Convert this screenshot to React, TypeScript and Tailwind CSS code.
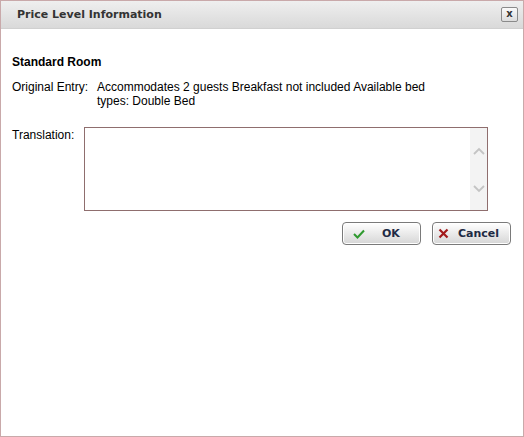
import React from "react";

export default function App() {
  return (
    <div className="w-[524px] h-[437px] bg-white border border-[#c9a9aa] flex flex-col">
      <div className="h-[28px] flex items-center justify-between pl-[16px] pr-[5px] bg-gradient-to-b from-[#efefef] to-[#d9d9d9] border-b border-[#d0d0d0]">
        <span className="font-['DejaVu_Sans'] font-bold text-[11px] text-[#333] pt-[1px]">Price Level Information</span>
        <div className="w-[17px] h-[15px] rounded-[2px] border border-[#8a8a8a] bg-gradient-to-b from-[#fafafa] to-[#dcdcdc] flex items-center justify-center font-['DejaVu_Sans'] font-bold text-[10px] leading-none text-[#333] pb-[1px]">x</div>
      </div>
      <div className="flex flex-col px-[11px] pt-[26px] font-['Liberation_Sans'] text-[12px] text-black leading-[14px]">
        <div className="font-bold">Standard Room</div>
        <div className="flex mt-[11px]">
          <div className="w-[85px] shrink-0">Original Entry:</div>
          <div className="w-[340px]">Accommodates 2 guests Breakfast not included Available bed types: Double Bed</div>
        </div>
        <div className="flex mt-[19px]">
          <div className="w-[72px] shrink-0 pt-[1px]">Translation:</div>
          <div className="w-[404px] h-[84px] border border-[#8f6e6e] flex justify-end">
            <div className="w-[17px] h-full bg-[#f3f3f3] flex flex-col items-center justify-between pt-[19px] pb-[17px]">
              <svg width="12" height="8" viewBox="0 0 12 8"><path d="M1 7 L6 2 L11 7" fill="none" stroke="#c4c4c4" strokeWidth="1.8" /></svg>
              <svg width="12" height="8" viewBox="0 0 12 8"><path d="M1 1 L6 6 L11 1" fill="none" stroke="#c4c4c4" strokeWidth="1.8" /></svg>
            </div>
          </div>
        </div>
        <div className="flex justify-end gap-[11px] mt-[11px] pr-[1px]">
          <button className="w-[79px] h-[23px] rounded-[4px] border border-[#7a7a7a] bg-gradient-to-b from-[#ffffff] to-[#d6d6d6] flex items-center pl-[10px] gap-[17px] font-['DejaVu_Sans'] font-bold text-[11px] text-[#1e2a44] shadow-[inset_0_0_0_1px_#fff]">
            <svg width="12" height="10" viewBox="0 0 12 10"><path d="M1 5 L4.5 8.5 L11 1.5" fill="none" stroke="#2f9a2f" strokeWidth="2" /></svg>
            <span>OK</span>
          </button>
          <button className="w-[79px] h-[23px] rounded-[4px] border border-[#7a7a7a] bg-gradient-to-b from-[#ffffff] to-[#d6d6d6] flex items-center pl-[5px] gap-[9px] font-['DejaVu_Sans'] font-bold text-[11px] text-[#1e2a44] shadow-[inset_0_0_0_1px_#fff]">
            <svg width="11" height="11" viewBox="0 0 11 11"><path d="M1.5 1.5 L9.5 9.5 M9.5 1.5 L1.5 9.5" fill="none" stroke="#a3191b" strokeWidth="2.2" /></svg>
            <span>Cancel</span>
          </button>
        </div>
      </div>
    </div>
  );
}
